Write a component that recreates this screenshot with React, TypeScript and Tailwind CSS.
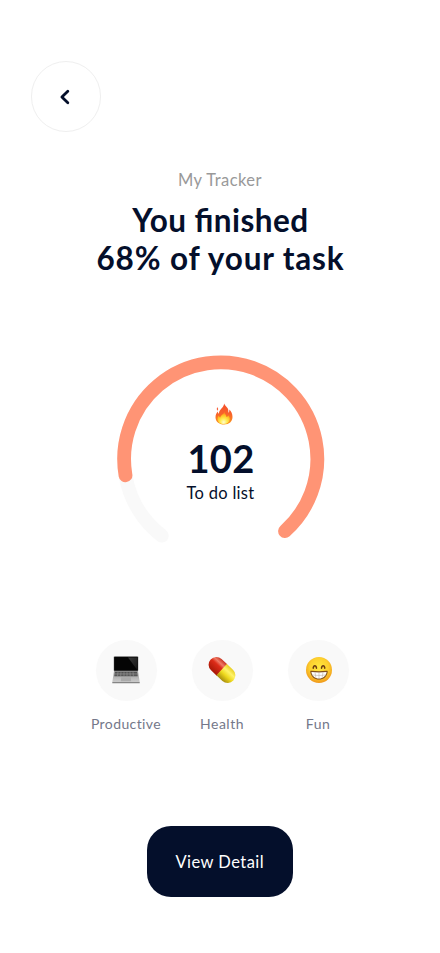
import React from 'react';

function Flame() {
  return (
    <svg className="block h-[22px] w-[18px]" viewBox="0 0 18 22">
      <defs>
        <linearGradient id="flame" x1="0" y1="0" x2="0" y2="1">
          <stop offset="0" stopColor="#f4502c" />
          <stop offset="0.5" stopColor="#f8622a" />
          <stop offset="1" stopColor="#fb9a1c" />
        </linearGradient>
        <radialGradient id="core" cx="0.5" cy="0.85" r="0.75">
          <stop offset="0" stopColor="#fffbd0" />
          <stop offset="0.35" stopColor="#ffee55" />
          <stop offset="0.75" stopColor="#ffbd22" />
          <stop offset="1" stopColor="#fd7a22" />
        </radialGradient>
      </defs>
      <path d="M9.200.400c.300 2 2.600 3.200 3.600 5.200.7 1.400.7 2.900.5 4.100.9-.6 1.200-1.800 1-3.200 2 1.700 3.200 4.600 3.200 7.500 0 4.500-3.300 7.500-8.400 7.500S.5 18.500.5 14.200c0-2.400 1-4.200 2.200-5.800.2 1.100.6 1.900 1.300 2.400C3.500 6.500 8.700 5 9.200.4Z" fill="url(#flame)" />
      <path d="M2.400 4.300c1 .9 1 2.300.1 3.500-.9-1-1-2.400-.1-3.500Z" fill="#f7613e" />
      <path d="M9.600 8.500c.2 2.400 1.700 3.500 1.900 5.600.8-.3 1.500-1 1.700-1.900 1.200 1.300 1.800 2.500 1.600 4-.3 3-2.600 4.800-6.100 4.800s-6.100-1.900-6.200-5c0-1.300.5-2.500 1.300-3.400.2 1 .6 1.600 1.400 2C5.700 12 8.900 11.300 9.600 8.500Z" fill="url(#core)" />
    </svg>
  );
}

function Laptop() {
  return (
    <svg className="block h-[28px] w-[28px]" viewBox="0 0 28 28">
      <defs>
        <linearGradient id="deck" x1="0" y1="0" x2="0" y2="1">
          <stop offset="0" stopColor="#9a9a9a" />
          <stop offset="1" stopColor="#cacaca" />
        </linearGradient>
        <linearGradient id="glare" x1="0" y1="0" x2="1" y2="1">
          <stop offset="0" stopColor="#383838" />
          <stop offset="1" stopColor="#151515" />
        </linearGradient>
      </defs>
      <rect x="1.600" y=".3" width="24.800" height="14.900" rx="1" fill="#a6a6a6" />
      <rect x="2.100" y=".8" width="23.800" height="14" rx=".5" fill="#050505" />
      <path d="M16 1.500h9.300v12.500Z" fill="url(#glare)" />
      <path d="M2 15h24l1.700 11H.3Z" fill="url(#deck)" />
      <path d="M3.100 15.800h21.800l.8 4.400H2.300Z" fill="#4a4a4a" />
      <path d="M2.900 17.300h22.200M2.600 18.800h22.800M6 15.800l-.5 4.400M9 15.800l-.3 4.400M12 15.800v4.400M15 15.800v4.400M18 15.800l.2 4.400M21 15.800l.4 4.400" stroke="#a0a0a0" strokeWidth=".5" />
      <path d="M9.200 21.200h9.600l.3 4.100H8.900Z" fill="#aaaaaa" />
      <rect x=".2" y="26" width="27.600" height="1.300" rx=".5" fill="#858585" />
    </svg>
  );
}

function Pill() {
  return (
    <svg className="block h-[28px] w-[28px]" viewBox="0 0 28 28">
      <defs>
        <linearGradient id="red" x1="0" y1="0" x2="0" y2="1">
          <stop offset="0" stopColor="#c93522" />
          <stop offset="0.25" stopColor="#ef7a66" />
          <stop offset="0.45" stopColor="#dd2c18" />
          <stop offset="1" stopColor="#a81807" />
        </linearGradient>
        <linearGradient id="yellow" x1="0" y1="0" x2="0" y2="1">
          <stop offset="0" stopColor="#e8cf22" />
          <stop offset="0.3" stopColor="#fff36a" />
          <stop offset="0.6" stopColor="#eed91e" />
          <stop offset="1" stopColor="#a78d0d" />
        </linearGradient>
      </defs>
      <g transform="rotate(43 14 14)">
        <path d="M14 6.300H6.200a7.700 7.700 0 0 0 0 15.400H14Z" fill="url(#red)" />
        <path d="M13.500 6.300h8.300a7.700 7.700 0 0 1 0 15.400h-8.300Z" fill="url(#yellow)" />
      </g>
    </svg>
  );
}

function Grin() {
  return (
    <svg className="ml-px block h-[28px] w-[28px]" viewBox="0 0 28 28">
      <defs>
        <radialGradient id="face" cx="0.5" cy="0.4" r="0.6">
          <stop offset="0" stopColor="#ffe83f" />
          <stop offset="0.6" stopColor="#fdd02e" />
          <stop offset="1" stopColor="#f0981b" />
        </radialGradient>
      </defs>
      <circle cx="14" cy="14" r="13" fill="url(#face)" />
      <path d="M8.200 12.200c.4-3.300 2.900-3.300 3.300 0M16.500 12.200c.4-3.300 2.900-3.300 3.300 0" fill="none" stroke="#6d3d12" strokeWidth="1.500" strokeLinecap="round" />
      <path d="M5.300 16c-.2-.9.300-1.300 1.200-1.200 5 .5 10 .5 15 0 .9-.1 1.400.300 1.200 1.200-.9 5-4.300 7.600-8.700 7.600s-7.800-2.600-8.700-7.600Z" fill="#82501b" />
      <path d="M6.400 16c5.100.6 10.100.6 15.200 0-.7 4-3.500 6.500-7.600 6.500s-6.900-2.500-7.600-6.500Z" fill="#fff" />
      <path d="M6.900 18.900c4.700.7 9.500.7 14.200 0M10 16.300l.9 5.400M14 16.500v5.800M18 16.300l-.9 5.400" fill="none" stroke="#bdb4a5" strokeWidth=".6" />
    </svg>
  );
}

const categories = [
  { name: 'Productive', icon: <Laptop />, text: 'tracking-[0.4px]' },
  { name: 'Health', icon: <Pill />, text: 'tracking-[0.5px]' },
  { name: 'Fun', icon: <Grin />, text: 'tracking-[0.5px]' },
];

export default function App() {
  return (
    <main className="h-[953px] w-[440px] overflow-hidden bg-white pt-[61px] font-['Lato',sans-serif] text-[#040f2b]">
      <button aria-label="Back" className="ml-[30.500px] flex size-[70.500px] items-center justify-center rounded-full border border-[#efefef]">
        <svg className="mt-px mr-[2px] block h-4 w-3" viewBox="0 0 12 16" fill="none" stroke="#040f2b" strokeWidth="2.800" strokeLinecap="round" strokeLinejoin="round">
          <path d="M8.800 2.200 2.900 8l5.900 5.800" />
        </svg>
      </button>

      <header className="mt-[38.500px] flex flex-col items-center pl-px text-center whitespace-nowrap">
        <p className="pr-px text-[16.500px] leading-[21px] tracking-[0.45px] text-[#999999]">My Tracker</p>
        <h1 className="mt-[10px] text-[31.500px] leading-[38px] font-bold [font-feature-settings:'liga']">
          <span className="block tracking-[0.450px]">You finished</span>
          <span className="block tracking-[0.850px]">68% of your task</span>
        </h1>
      </header>

      <section className="mt-[78px] ml-[117px] grid h-[208px] w-[208px]">
        <svg className="col-start-1 row-start-1 block size-[208px]" viewBox="117 354.700 208 208" fill="none" strokeWidth="13.800" strokeLinecap="round">
          <path d="M125.500 475A96.500 96.500 0 0 0 161.800 535.400" stroke="#f9f9f9" />
          <path d="M125.500 475A96.600 96.600 0 1 1 285 530.800" stroke="#ff9475" />
        </svg>
        <div className="col-start-1 row-start-1 flex flex-col items-center pt-[48px] whitespace-nowrap">
          <div className="ml-[5px]"><Flame /></div>
          <p className="mt-[12px] text-[38px] leading-[42px] font-bold tracking-[0.3px]">102</p>
          <p className="mt-[4px] pr-px text-[16.500px] leading-5 tracking-[0.3px]">To do list</p>
        </div>
      </section>

      <section className="mt-[77px] ml-[78px] flex">
        {categories.map((category) => (
          <div key={category.name} className="flex w-24 flex-col items-center">
            <div className="flex size-[61px] items-center justify-center rounded-full bg-[#f9f9f9] pb-px">{category.icon}</div>
            <p className={`mt-[13px] text-[14px] leading-5 text-[#74788a] ${category.text}`}>{category.name}</p>
          </div>
        ))}
      </section>

      <button className="mt-[92px] ml-[147px] flex h-[70.500px] w-[145.500px] items-center justify-center rounded-[24px] bg-[#040f2b] pt-[2px] text-[16.500px] tracking-[0.45px] whitespace-nowrap text-white">
        View Detail
      </button>
    </main>
  );
}
